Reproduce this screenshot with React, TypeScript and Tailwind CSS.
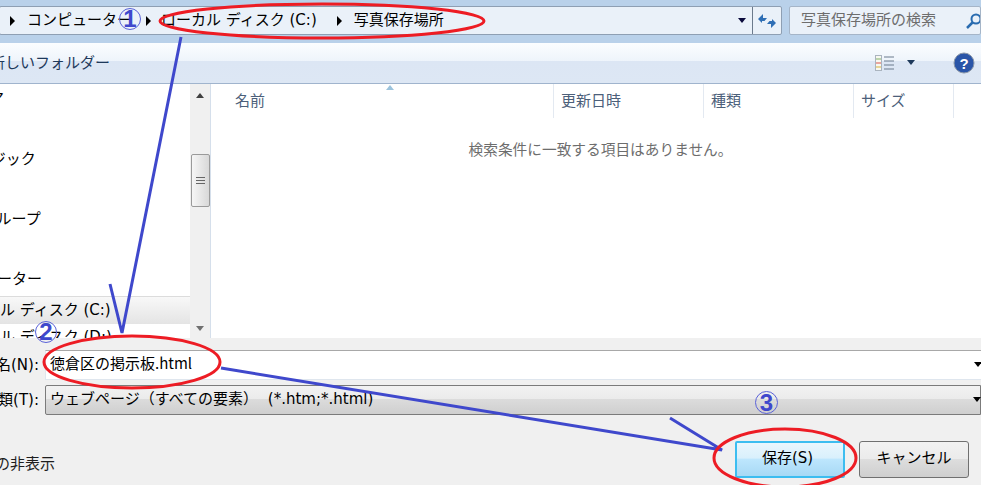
const FONT = "font-['DejaVu_Sans','Noto_Sans_CJK_JP',sans-serif]";

const SIDE_ROWS = [
  { label: "メディア", margin: "-ml-[55px]" },
  { label: "ミュージック", margin: "-ml-[54px]" },
  { label: "ホームグループ", margin: "-ml-[63px]" },
  { label: "コンピューター", margin: "-ml-[63px]" },
];

function Tri({ dir, className }: { dir: "up" | "down" | "right"; className?: string }) {
  const points = dir === "up" ? "1,7 5,2 9,7" : dir === "down" ? "1,2 9,2 5,7" : "2,0 7,5 2,10";
  return (
    <svg width="10" height="10" viewBox="0 0 10 10" className={className}>
      <polygon points={points} fill="currentColor" />
    </svg>
  );
}

function Circled({ n, className }: { n: string; className: string }) {
  return (
    <span
      className={`absolute flex items-center justify-center rounded-full border border-[#5a62d8] text-[#3f48cc] font-['Liberation_Sans',sans-serif] font-bold text-[24px] leading-none ${className}`}
    >
      {n}
    </span>
  );
}

function HeaderCell({ label, className }: { label: string; className: string }) {
  return (
    <div className={`flex h-[34px] items-center border-r border-[#e3e9f1] pl-[7px] text-[15px] text-[#4c607a] ${className}`}>
      {label}
    </div>
  );
}

export default function App() {
  return (
    <div className={`relative flex h-[485px] w-[981px] flex-col overflow-hidden bg-[#f0f0f0] text-[15px] text-black ${FONT}`}>
      {/* address bar */}
      <div className="flex h-[43px] shrink-0 gap-[7px] bg-[#b9d1ea] pt-[6px] pb-[8px]">
        <div className="-ml-px flex h-[29px] flex-1 items-center rounded-[2px] border border-[#8e9fb3] bg-[#eaf1f9] whitespace-nowrap">
          <Tri dir="right" className="ml-[8px] text-black" />
          <span className="ml-[9px]">コンピューター</span>
          <Tri dir="right" className="ml-[12px] text-black" />
          <span className="ml-[7px]">ローカル ディスク (C:)</span>
          <Tri dir="right" className="ml-[18px] text-black" />
          <span className="ml-[9px]">写真保存場所</span>
          <Tri dir="down" className="ml-auto mr-[5px] text-[#0a0a3c]" />
          <div className="flex h-full w-[29px] items-center justify-center border-l border-[#6b7a8c]">
            <svg width="18" height="16" viewBox="0 0 18 16">
              <path d="M9 5H5V1L0 6l4 4V8h2.5L9 5z" fill="#2f6fb5" />
              <path d="M9 11h4v4l5-5-4-4v2h-2.500L9 11z" fill="#2f6fb5" />
            </svg>
          </div>
        </div>
        <div className="flex h-[29px] w-[192px] shrink-0 items-center overflow-hidden rounded-[2px] border border-[#a5b5c8] bg-[#eaf1f9] pl-[11px] text-[#6d6d6d]">
          <span className="shrink-0">写真保存場所の検索</span>
          <svg width="18" height="18" viewBox="0 0 18 18" className="ml-[29px] shrink-0">
            <circle cx="11" cy="7" r="4.5" fill="none" stroke="#2a6cb0" strokeWidth="2" />
            <path d="M7.5 10.5L2 16" stroke="#2a6cb0" strokeWidth="2.500" />
          </svg>
        </div>
      </div>

      {/* toolbar */}
      <div className="flex h-[41px] shrink-0 items-center justify-between border-b border-[#a0b4cd] bg-[linear-gradient(#fbfdff_0%,#eef4fb_45%,#dce6f4_46%,#dde7f4_100%)]">
        <span className="-ml-[10px] text-[#1e395b]">新しいフォルダー</span>
        <div className="flex items-center">
          <svg width="20" height="16" viewBox="0 0 20 16">
            <rect x="0.5" y="0.5" width="6" height="15" fill="#f8f8f0" stroke="#aab4bf" />
            <path d="M1 4h5" stroke="#7fb069" />
            <path d="M1 8h5" stroke="#d9534f" />
            <path d="M1 12h5" stroke="#d6b13f" />
            <path d="M9 2h10M9 6h10M9 10h10M9 14h10" stroke="#6b7b8d" />
          </svg>
          <Tri dir="down" className="ml-[11px] text-[#1e395b]" />
          <svg width="22" height="22" viewBox="0 0 22 22" className="ml-[37px] mr-[6px]">
            <circle cx="11" cy="11" r="10" fill="#2a55a8" stroke="#8b97a8" />
            <text x="11" y="16.500" textAnchor="middle" fill="#fff" fontSize="15" fontWeight="700" fontFamily="Liberation Sans">?</text>
          </svg>
        </div>
      </div>

      {/* main */}
      <div className="flex h-[254px] shrink-0 bg-white">
        <div className="flex w-[190px] shrink-0 flex-col overflow-hidden whitespace-nowrap">
          {SIDE_ROWS.map((row) => (
            <div key={row.label} className="mt-[30px] flex h-[30px] shrink-0 items-center first:mt-0">
              <span className={row.margin}>{row.label}</span>
            </div>
          ))}
          <div className="mt-[2px] flex h-[28px] shrink-0 items-center border-t border-[#dcdcdc] bg-[linear-gradient(#f8f8f8,#e4e4e4)]">
            <span className="-ml-[45px]">ローカル ディスク (C:)</span>
          </div>
          <div className="-mt-px flex h-[28px] shrink-0 items-center">
            <span className="-ml-[45px]">ローカル ディスク (D:)</span>
          </div>
        </div>
        <div className="flex w-[20px] shrink-0 flex-col items-center bg-[#f0f0f0] pt-[7px]">
          <Tri dir="up" className="text-[#404040]" />
          <div className="mt-[53px] flex h-[53px] w-[19px] flex-col items-center justify-center gap-[2px] rounded-[2px] border border-[#9a9a9a] bg-[linear-gradient(90deg,#f6f6f6,#d8d8d8)]">
            <span className="h-px w-[9px] bg-[#666666]" />
            <span className="h-px w-[9px] bg-[#666666]" />
            <span className="h-px w-[9px] bg-[#666666]" />
          </div>
          <Tri dir="down" className="mt-auto mb-[4px] text-[#707070]" />
        </div>
        <div className="w-[2px] shrink-0 border-l border-[#d5dfeb] bg-white" />
        <div className="relative min-w-0 flex-1">
          <Tri dir="up" className="absolute left-[173px] top-[-1px] text-[#9cc3dc]" />
          <div className="flex">
            <HeaderCell label="名前" className="w-[342px] pl-[23px]" />
            <HeaderCell label="更新日時" className="w-[150px]" />
            <HeaderCell label="種類" className="w-[150px]" />
            <HeaderCell label="サイズ" className="w-[100px]" />
          </div>
          <p className="mt-[21px] pl-[8px] text-center text-[14.7px] text-[#6d6d6d]">検索条件に一致する項目はありません。</p>
        </div>
      </div>

      {/* file name + type */}
      <div className="flex flex-1 flex-col pt-[12px]">
        <div className="flex h-[30px] items-center">
          <div className="flex w-[45px] shrink-0 justify-end overflow-hidden whitespace-nowrap pr-[6px]">ファイル名(N):</div>
          <div className="flex h-full flex-1 items-center border-t border-[#a8a8a8] border-l border-l-[#dfe6ee] border-b border-b-[#dfe6ee] bg-white pl-[4px]">
            <span className="mb-[3px] font-['Noto_Sans_CJK_JP',sans-serif]">徳倉区の掲示板.html</span>
            <Tri dir="down" className="ml-auto -mr-[2px] text-black" />
          </div>
        </div>
        <div className="mt-[5px] flex h-[30px] items-center">
          <div className="flex w-[45px] shrink-0 justify-end overflow-hidden whitespace-nowrap pr-[6px]">ファイルの種類(T):</div>
          <div className="flex h-full flex-1 items-center rounded-l-[2px] border border-[#7b7b7b] bg-[linear-gradient(#f2f2f2_0%,#ebebeb_45%,#dcdcdc_46%,#cfcfcf_100%)] pl-[4px]">
            <span className="mb-[2px]">ウェブページ（すべての要素） <span className="ml-[5px]">(*.htm;*.html)</span></span>
            <Tri dir="down" className="ml-auto -mr-[2px] text-black" />
          </div>
        </div>
        <div className="mt-[26px] flex items-start justify-between">
          <span className="-ml-[80px] mt-[12px] text-[#1e1e1e]">フォルダーの非表示</span>
          <div className="flex gap-[14px] pr-[12px]">
            <button className="h-[37px] w-[110px] rounded-[2px] border-2 border-[#3cbdf0] bg-[linear-gradient(#e9f6fd_0%,#d9f0fc_45%,#bde6fd_50%,#a7d9f5_100%)] pb-[2px] pr-[5px] text-[15px]">保存(S)</button>
            <button className="h-[37px] w-[110px] rounded-[3px] border border-[#707070] bg-[linear-gradient(#f2f2f2_0%,#ebebeb_48%,#dddddd_50%,#cfcfcf_100%)] pb-[2px] text-[15px]">キャンセル</button>
          </div>
        </div>
      </div>

      {/* hand-drawn annotations */}
      <svg width="981" height="485" viewBox="0 0 981 485" className="pointer-events-none absolute left-0 top-0">
        <g fill="none" stroke="#3f48cc" strokeWidth="3">
          <path d="M181 37L122 333L110 284" />
          <path d="M221 368L722 450L670 418" />
        </g>
        <g fill="none" stroke="#ed1c24" strokeWidth="3">
          <ellipse cx="322" cy="21" rx="162" ry="17" />
          <ellipse cx="132" cy="362" rx="88" ry="26" />
          <ellipse cx="785" cy="458" rx="71" ry="29" />
        </g>
      </svg>
      <Circled n="1" className="left-[119px] top-[8px] h-[22px] w-[22px]" />
      <Circled n="2" className="left-[35px] top-[321px] h-[22px] w-[22px]" />
      <Circled n="3" className="left-[755px] top-[391px] h-[23px] w-[23px]" />
    </div>
  );
}
